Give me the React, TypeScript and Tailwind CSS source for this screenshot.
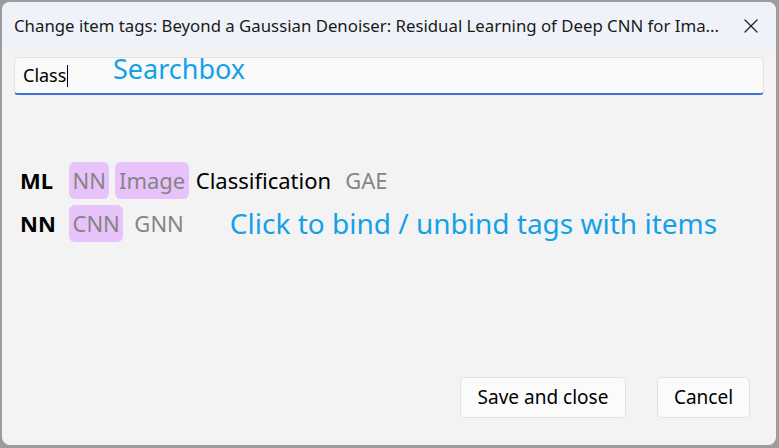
import { X } from 'lucide-react';

const font = { fontFamily: '"Noto Sans", "Open Sans", sans-serif' };

const Chip = ({ label, className = '' }: { label: string; className?: string }) => (
  <span className={`rounded-md bg-[#e8c3fb] px-[3.5px] text-[#858585] leading-[37px] ${className}`}>{label}</span>
);

const App = () => {
  return (
    <div className="h-[448px] w-[779px] bg-[#9c9c9c] pl-[2px] pt-[2px] pr-[3px] pb-[3px]" style={font}>
      <div className="flex h-full flex-col overflow-hidden rounded-lg bg-[#f3f3f3]">
        <div className="flex h-[47px] shrink-0 items-center justify-between bg-[#eff3f9] pl-[12px] pr-[13px]">
          <span className="text-[16.8px] text-[#1a1a1a]">
            Change item tags: Beyond a Gaussian Denoiser: Residual Learning of Deep CNN for Ima...
          </span>
          <X size={24} strokeWidth={1.2} className="text-[#222]" />
        </div>

        <div className="flex flex-1 flex-col px-[12px] pt-[8px]">
          <div className="relative flex h-[38px] items-center rounded-[4px] border border-[#e3e3e3] border-b-2 border-b-[#3f6fd8] bg-[#f9f9f9] pl-[8px]">
            <span className="text-[18px] text-black">Class</span>
            <span className="ml-[1px] h-[22px] w-px bg-black" />
            <span className="absolute left-[98px] top-[-9px] text-[27px] text-[#13a1e8]">Searchbox</span>
          </div>

          <div className="mt-[67px] flex flex-col gap-[6px] pl-[6px] text-[22px]">
            <div className="flex items-center">
              <span className="w-[49px] font-bold text-black">ML</span>
              <Chip label="NN" />
              <Chip label="Image" className="ml-[6px]" />
              <span className="ml-[7px] text-black">Classification</span>
              <span className="ml-[14px] text-[#858585]">GAE</span>
            </div>
            <div className="flex h-[37px] items-center">
              <span className="w-[49px] font-bold text-black">NN</span>
              <Chip label="CNN" />
              <span className="ml-[11px] text-[#858585]">GNN</span>
              <span className="ml-[46px] text-[28px] leading-[37px] text-[#13a1e8]">
                Click to bind / unbind tags with items
              </span>
            </div>
          </div>

          <div className="mt-auto mb-[27px] flex justify-end gap-[31px] pr-[14px]">
            <button className="h-[41px] w-[166px] rounded-[5px] border border-[#e2e2e2] bg-[#fbfbfb] text-[19px] text-black">
              Save and close
            </button>
            <button className="h-[41px] w-[93px] rounded-[5px] border border-[#e2e2e2] bg-[#fbfbfb] text-[19px] text-black">
              Cancel
            </button>
          </div>
        </div>
      </div>
    </div>
  );
};

export default App;
